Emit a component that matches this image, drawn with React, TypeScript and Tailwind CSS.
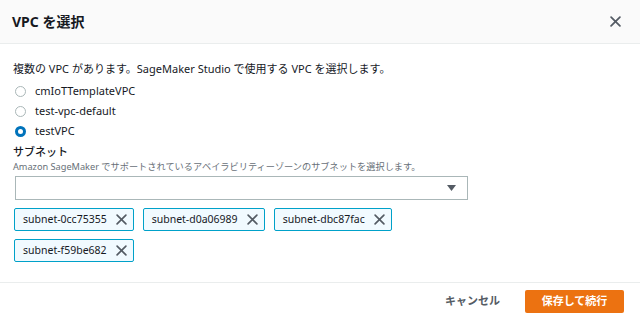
const vpcs = ['cmIoTTemplateVPC', 'test-vpc-default', 'testVPC'];
const subnets = ['subnet-0cc75355', 'subnet-d0a06989', 'subnet-dbc87fac', 'subnet-f59be682'];

function CloseIcon({ size, width }: { size: number; width: number }) {
  return (
    <svg width={size} height={size} viewBox="0 0 10 10" className="shrink-0">
      <path d="M1 1 L9 9 M9 1 L1 9" stroke="#545b64" strokeWidth={width} strokeLinecap="round" />
    </svg>
  );
}

function Radio({ label, checked }: { label: string; checked?: boolean }) {
  return (
    <div className="flex items-center h-5">
      {checked ? (
        <span className="w-[11px] h-[11px] rounded-full border-[3px] border-[#0073bb] bg-white ml-[2px]" />
      ) : (
        <span className="w-[11px] h-[11px] rounded-full border border-[#aab7b8] bg-white ml-[2px]" />
      )}
      <span className="ml-[9px] text-[11px] text-[#16191f]">{label}</span>
    </div>
  );
}

export default function App() {
  return (
    <div
      className="w-[640px] h-[322px] bg-white flex flex-col overflow-hidden"
      style={{ fontFamily: '"Noto Sans", "Noto Sans CJK JP", sans-serif' }}
    >
      {/* Header */}
      <div className="h-[44px] shrink-0 bg-[#fafafa] border-b border-[#eaeded] flex items-center justify-between pl-[12px] pr-[19px]">
        <h2 className="text-[14px] font-bold text-[#16191f]">VPC を選択</h2>
        <CloseIcon size={11} width={1.6} />
      </div>

      {/* Body */}
      <div className="flex-1 pl-[13px] pr-[172px] pt-[15px]">
        <p className="text-[11px] leading-5 text-[#16191f]">
          複数の VPC があります。SageMaker Studio で使用する VPC を選択します。
        </p>
        <div className="mt-[2px] flex flex-col">
          {vpcs.map((v) => (
            <Radio key={v} label={v} checked={v === 'testVPC'} />
          ))}
        </div>

        <div className="mt-[3px] text-[11px] font-medium leading-4 text-[#16191f]">サブネット</div>
        <div className="text-[9.2px] leading-[14px] text-[#687078]">
          Amazon SageMaker でサポートされているアベイラビリティーゾーンのサブネットを選択します。
        </div>

        <div className="mt-[2px] ml-[2px] h-[24px] border border-[#aab7b8] bg-white flex items-center justify-end pr-[11px]">
          <svg width="9" height="6" viewBox="0 0 9 6">
            <path d="M0 0 H9 L4.5 6 Z" fill="#545b64" />
          </svg>
        </div>

        <div className="mt-[8px] ml-[1px] flex flex-wrap gap-x-[9px] gap-y-[8px]">
          {subnets.map((s) => (
            <div
              key={s}
              className="h-[23px] border border-[#00a1c9] bg-[#f1faff] flex items-center pl-[8px] pr-[6px] rounded-[2px]"
            >
              <span className="text-[10.5px] text-[#16191f]">{s}</span>
              <span className="ml-[9px]">
                <CloseIcon size={11} width={1.5} />
              </span>
            </div>
          ))}
        </div>
      </div>

      {/* Footer */}
      <div className="h-[40px] shrink-0 border-t border-[#eaeded] flex items-center justify-end pr-[16px] pb-[2px]">
        <button className="text-[11px] font-bold text-[#545b64] mr-[25px]">キャンセル</button>
        <button className="w-[99px] h-[23px] bg-[#ec7211] text-white text-[11px] font-bold rounded-[2px]">
          保存して続行
        </button>
      </div>
    </div>
  );
}
